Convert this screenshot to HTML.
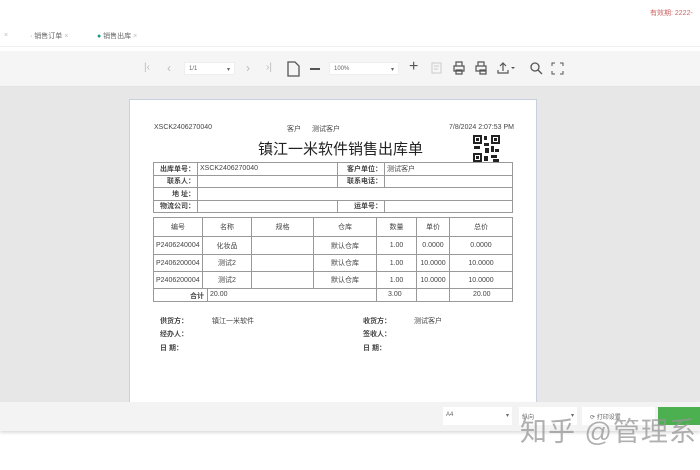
<!DOCTYPE html>
<html><head><meta charset="utf-8"><style>
*{margin:0;padding:0;box-sizing:border-box}
body{width:700px;height:470px;overflow:hidden;background:#fff;font-family:"Liberation Sans","Noto Sans CJK SC",sans-serif;position:relative;color:#333}
.a{position:absolute;white-space:nowrap}
.s{font-size:7px;color:#444}
table{border-collapse:collapse;position:absolute;font-size:7px;color:#444}
td{border:1px solid #999;padding:0 2px}
.ic{position:absolute;color:#666;font-size:12px}
</style></head><body>
<div class="a" style="left:650px;top:8px;font-size:7px;color:#c66">有效期: 2222-</div>
<div class="a" style="left:0;top:25px;width:700px;height:22px;background:#fff;border-bottom:1px solid #eee"></div>
<div class="a" style="left:4px;top:32px;font-size:7px;color:#bbb">×</div>
<div class="a" style="left:30px;top:31px;font-size:7px;color:#666">· 销售订单 <span style="color:#bbb">×</span></div>
<div class="a" style="left:97px;top:31px;font-size:7px;color:#666"><span style="color:#1a9a8a">●</span> 销售出库 <span style="color:#bbb">×</span></div>
<div class="a" style="left:0;top:51px;width:700px;height:36px;background:#f5f5f5;border-bottom:1px solid #e4e4e4"></div>
<div class="ic" style="left:144px;top:62px;color:#bbb;font-size:10px">|‹</div>
<div class="ic" style="left:167px;top:61px;color:#bbb">‹</div>
<div class="a" style="left:184px;top:62px;width:51px;height:13px;background:#fff;border:1px solid #eee;font-size:6px;padding:3px 4px;color:#666">1/1<span style="float:right">▾</span></div>
<div class="ic" style="left:246px;top:61px;color:#bbb">›</div>
<div class="ic" style="left:266px;top:62px;color:#bbb;font-size:10px">›|</div>
<svg class="a" style="left:286px;top:61px" width="14" height="16"><path d="M2 1h7l4 4v10H2z" fill="none" stroke="#555" stroke-width="1.3"/></svg>
<div class="a" style="left:310px;top:68px;width:10px;height:1.5px;background:#555"></div>
<div class="a" style="left:329px;top:62px;width:70px;height:13px;background:#fff;border:1px solid #eee;font-size:6px;padding:3px 4px;color:#666">100%<span style="float:right">▾</span></div>
<div class="ic" style="left:409px;top:58px;font-size:16px;color:#555">+</div>
<svg class="a" style="left:430px;top:61px" width="14" height="14"><path d="M2 2h9v10H2zM4 5h5M4 8h4" fill="none" stroke="#ccc"/></svg>
<svg class="a" style="left:452px;top:61px" width="14" height="14"><path d="M4 1h6v4H4zM2 5h10v5H2zM4 9h6v4H4z" fill="none" stroke="#555" stroke-width="1.2"/></svg>
<svg class="a" style="left:474px;top:61px" width="14" height="14"><path d="M4 1h6v4H4zM2 5h10v5H2zM6 9h6v4H6z" fill="none" stroke="#555" stroke-width="1.2"/></svg>
<svg class="a" style="left:497px;top:61px" width="20" height="14"><path d="M6 2v8M3 5l3-3 3 3M1 9v3h10V9" fill="none" stroke="#555" stroke-width="1.2"/><path d="M14 6h4l-2 2z" fill="#555"/></svg>
<svg class="a" style="left:529px;top:61px" width="14" height="14"><circle cx="6" cy="6" r="4" fill="none" stroke="#555" stroke-width="1.3"/><path d="M9 9l4 4" stroke="#555" stroke-width="1.3"/></svg>
<svg class="a" style="left:551px;top:62px" width="13" height="13"><path d="M1 4V1h3M9 1h3v3M12 9v3H9M4 12H1V9" fill="none" stroke="#555"/></svg>
<div class="a" style="left:0;top:87px;width:700px;height:315px;background:#e7e7e7"></div>
<div class="a" style="left:129px;top:99px;width:408px;height:303px;background:#fff;border:1px solid #c8d0e0;border-bottom:none"></div>
<div class="a s" style="left:154px;top:124px">XSCK2406270040</div>
<div class="a s" style="left:287px;top:124px">客户</div>
<div class="a s" style="left:312px;top:124px">测试客户</div>
<div class="a s" style="left:449px;top:124px">7/8/2024 2:07:53 PM</div>
<div class="a" style="left:258px;top:138px;font-size:15px;color:#222">镇江一米软件销售出库单</div>
<svg class="a" style="left:473px;top:135px" width="27" height="27"><g fill="#222"><rect x="0" y="0" width="9" height="9"/><rect x="18" y="0" width="9" height="9"/><rect x="0" y="18" width="9" height="9"/></g><g fill="#fff"><rect x="2" y="2" width="5" height="5"/><rect x="20" y="2" width="5" height="5"/><rect x="2" y="20" width="5" height="5"/></g><g fill="#222"><rect x="3" y="3" width="3" height="3"/><rect x="21" y="3" width="3" height="3"/><rect x="3" y="21" width="3" height="3"/><rect x="11" y="1" width="3" height="4"/><rect x="11" y="8" width="5" height="3"/><rect x="1" y="11" width="6" height="3"/><rect x="12" y="13" width="4" height="5"/><rect x="18" y="11" width="3" height="6"/><rect x="22" y="14" width="4" height="3"/><rect x="11" y="21" width="4" height="5"/><rect x="18" y="20" width="6" height="3"/><rect x="20" y="24" width="6" height="3"/></g></svg>
<table style="left:153px;top:162px;width:360px">
<colgroup><col style="width:44px"><col style="width:140px"><col style="width:47px"><col></colgroup>
<tr style="height:12.5px"><td style="text-align:right;font-weight:bold">出库单号：</td><td>XSCK2406270040</td><td style="text-align:right;font-weight:bold">客户单位：</td><td>测试客户</td></tr>
<tr style="height:12.5px"><td style="text-align:right;font-weight:bold">联系人：</td><td></td><td style="text-align:right;font-weight:bold">联系电话：</td><td></td></tr>
<tr style="height:12.5px"><td style="text-align:right;font-weight:bold">地 址：</td><td colspan="3"></td></tr>
<tr style="height:12.5px"><td style="text-align:right;font-weight:bold">物流公司：</td><td></td><td style="text-align:right;font-weight:bold">运单号：</td><td></td></tr>
</table>
<table style="left:153px;top:217px;width:360px;text-align:center">
<colgroup><col style="width:49px"><col style="width:49px"><col style="width:62px"><col style="width:63px"><col style="width:40px"><col style="width:33px"><col></colgroup>
<tr style="height:19px"><td>编号</td><td>名称</td><td>规格</td><td>仓库</td><td>数量</td><td>单价</td><td>总价</td></tr>
<tr style="height:18px"><td style="text-align:left">P2406240004</td><td>化妆品</td><td></td><td>默认仓库</td><td>1.00</td><td>0.0000</td><td>0.0000</td></tr>
<tr style="height:17px"><td style="text-align:left">P2406200004</td><td>测试2</td><td></td><td>默认仓库</td><td>1.00</td><td>10.0000</td><td>10.0000</td></tr>
<tr style="height:17px"><td style="text-align:left">P2406200004</td><td>测试2</td><td></td><td>默认仓库</td><td>1.00</td><td>10.0000</td><td>10.0000</td></tr>
<tr style="height:14px"><td colspan="7" style="padding:0;border:none"></td></tr>
</table>
<div class="a" style="left:153px;top:288px;width:360px;height:14px;border:1px solid #999;border-top:none"></div>
<div class="a" style="left:207px;top:288px;width:1px;height:14px;background:#999"></div>
<div class="a" style="left:376px;top:288px;width:1px;height:14px;background:#999"></div>
<div class="a" style="left:416px;top:288px;width:1px;height:14px;background:#999"></div>
<div class="a" style="left:449px;top:288px;width:1px;height:14px;background:#999"></div>
<div class="a s" style="left:190px;top:291px;font-weight:bold">合计</div>
<div class="a s" style="left:210px;top:291px">20.00</div>
<div class="a s" style="left:388px;top:291px">3.00</div>
<div class="a s" style="left:473px;top:291px">20.00</div>
<div class="a s" style="left:160px;top:316px;font-weight:bold">供货方：</div>
<div class="a s" style="left:212px;top:316px">镇江一米软件</div>
<div class="a s" style="left:363px;top:316px;font-weight:bold">收货方：</div>
<div class="a s" style="left:414px;top:316px">测试客户</div>
<div class="a s" style="left:160px;top:329px;font-weight:bold">经办人：</div>
<div class="a s" style="left:363px;top:329px;font-weight:bold">签收人：</div>
<div class="a s" style="left:160px;top:343px;font-weight:bold">日 期：</div>
<div class="a s" style="left:363px;top:343px;font-weight:bold">日 期：</div>
<div class="a" style="left:0;top:402px;width:700px;height:29px;background:#f3f3f3;box-shadow:0 2px 3px #ddd"></div>
<div class="a" style="left:443px;top:407px;width:69px;height:18px;background:#fff;font-size:6px;padding:5px 3px;color:#666">A4<span style="float:right">▾</span></div>
<div class="a" style="left:519px;top:407px;width:58px;height:18px;background:#fff;font-size:6px;padding:5px 3px;color:#666">纵向<span style="float:right">▾</span></div>
<div class="a" style="left:582px;top:407px;width:73px;height:18px;background:#fff;font-size:6px;padding:5px 8px;color:#666">⟳ 打印设置</div>
<div class="a" style="left:658px;top:407px;width:42px;height:18px;background:#4caf50"></div>
<div class="a" style="left:520px;top:410px;font-size:27px;color:rgba(150,150,150,.75);letter-spacing:1px">知乎 @管理系</div>
</body></html>
